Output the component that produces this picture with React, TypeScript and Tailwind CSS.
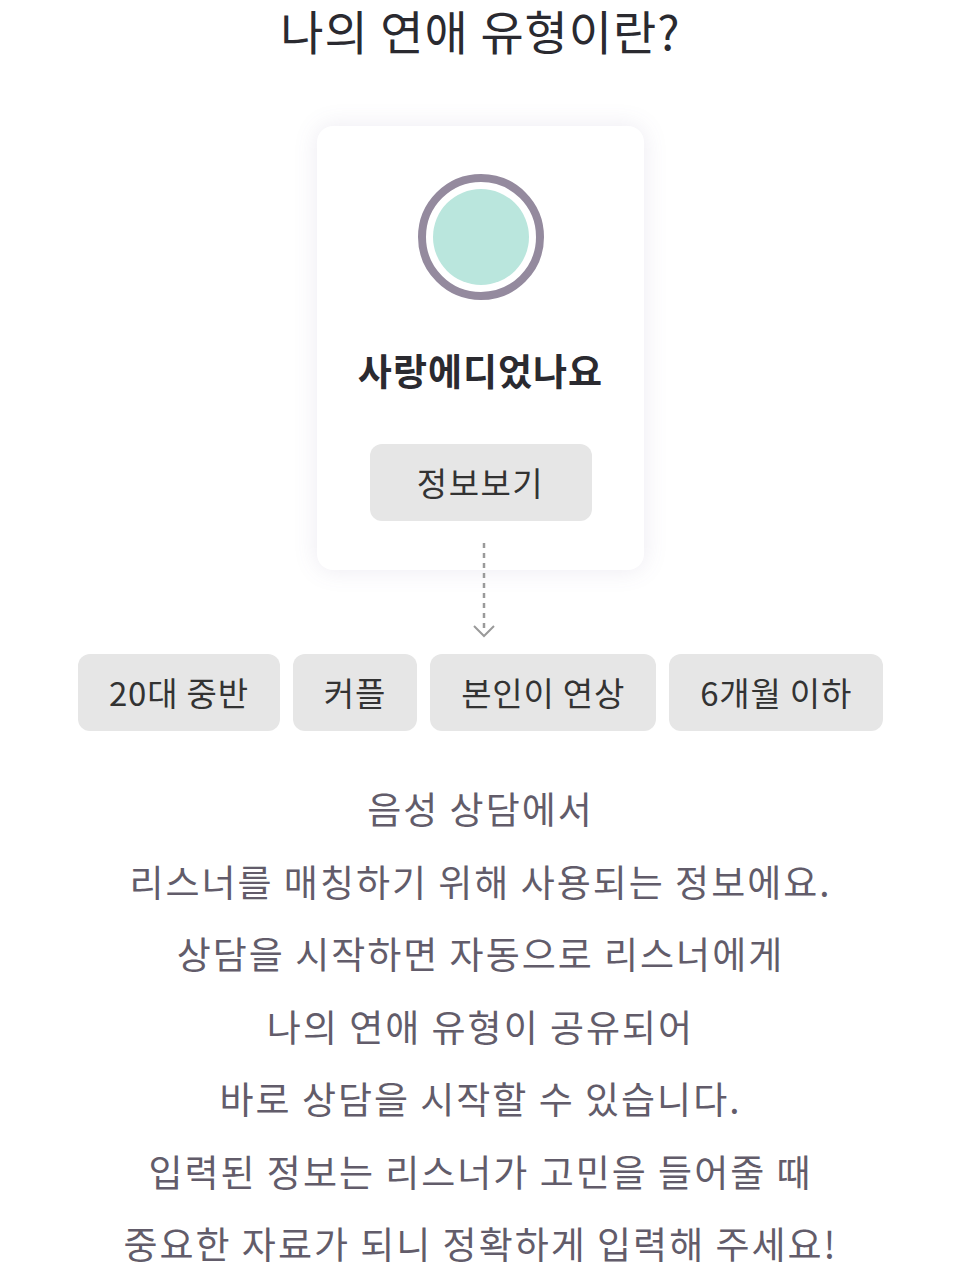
import React from "react";

const font = { fontFamily: '"Noto Sans CJK KR", "Noto Sans", sans-serif' };

export default function App() {
  const tags = ["20대 중반", "커플", "본인이 연상", "6개월 이하"];
  const lines = [
    "음성 상담에서",
    "리스너를 매칭하기 위해 사용되는 정보에요.",
    "상담을 시작하면 자동으로 리스너에게",
    "나의 연애 유형이 공유되어",
    "바로 상담을 시작할 수 있습니다.",
    "입력된 정보는 리스너가 고민을 들어줄 때",
    "중요한 자료가 되니 정확하게 입력해 주세요!",
  ];
  return (
    <div className="w-[961px] h-[1281px] bg-white flex flex-col items-center overflow-hidden" style={font}>
      <h1 className="pt-[2px] text-[47px] leading-[56px] text-[#2a2a30] font-normal tracking-[1px]">나의 연애 유형이란?</h1>
      <div className="mt-[68px] w-[327px] h-[444px] rounded-[16px] bg-white shadow-[0_0_24px_rgba(110,90,150,0.13)] flex flex-col items-center">
        <div className="mt-[48px] w-[126px] h-[126px] rounded-full border-[8px] border-[#948a9e] p-[7px]">
          <div className="w-full h-full rounded-full bg-[#bae6dd]" />
        </div>
        <div className="mt-[46px] text-[37px] leading-[48px] font-bold text-[#2a2a30] tracking-[1px]">사랑에디었나요</div>
        <button className="mt-[50px] w-[222px] h-[77px] rounded-[12px] bg-[#e6e6e6] text-[33px] text-[#333333] tracking-[1.5px]">정보보기</button>
      </div>
      <div className="relative -mt-[27px] ml-[6px] w-[24px] h-[96px]">
        <svg width="24" height="96" viewBox="0 0 24 96">
          <line x1="12" y1="0" x2="12" y2="90" stroke="#9a9a9a" strokeWidth="2.5" strokeDasharray="5 5" />
          <polyline points="2,83 12,93 22,83" fill="none" stroke="#9a9a9a" strokeWidth="2" />
        </svg>
      </div>
      <div className="mt-[15px] flex gap-[13px]">
        {tags.map((t) => (
          <div key={t} className="h-[77px] px-[31px] rounded-[12px] bg-[#e6e6e6] flex items-center text-[33px] text-[#333333] tracking-[0.8px]">
            {t}
          </div>
        ))}
      </div>
      <div className="mt-[41px] flex flex-col items-center text-[37px] leading-[72.5px] text-[#625c6a] tracking-[2px]">
        {lines.map((l) => (
          <div key={l}>{l}</div>
        ))}
      </div>
    </div>
  );
}
